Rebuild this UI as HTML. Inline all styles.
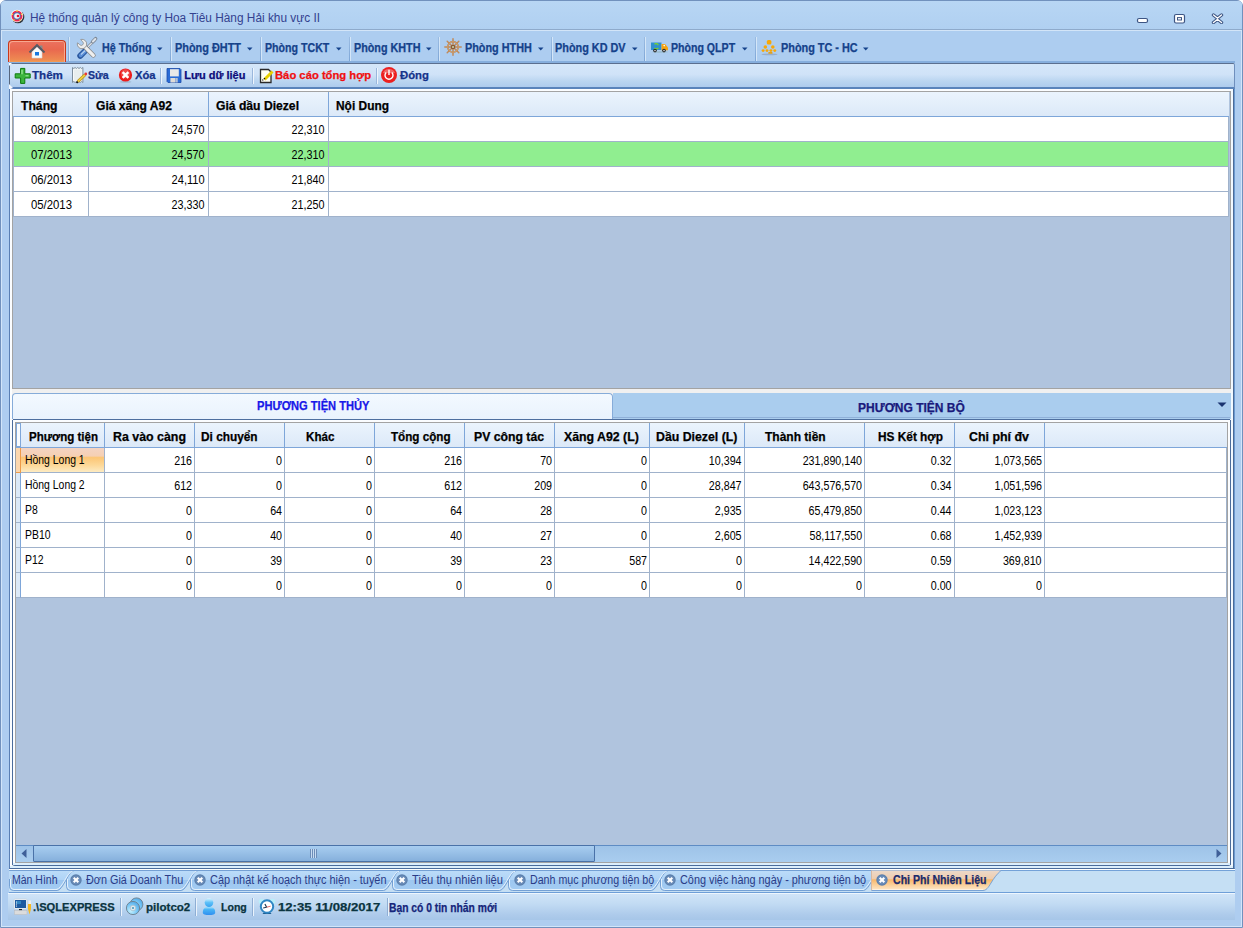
<!DOCTYPE html>
<html><head><meta charset="utf-8"><style>
html,body{margin:0;padding:0;}
body{width:1243px;height:928px;position:relative;overflow:hidden;background:#ffffff;font-family:"Liberation Sans",sans-serif;}
div,span,svg{position:absolute;}
.t{white-space:nowrap;}
</style></head><body>
<div style="left:0px;top:0px;width:1243px;height:928px;background:#aecdf0;border:1px solid #7191bd;box-sizing:border-box;border-radius:6px 6px 0 0;"></div>
<div style="left:1px;top:1px;width:1241px;height:28px;background:linear-gradient(#b8d6f4,#b0d0f1);border-radius:4px 4px 0 0;"></div>
<div style="left:1px;top:29px;width:1241px;height:1px;background:#8eaacb;"></div>
<div style="left:1px;top:30px;width:1241px;height:1px;background:#d3e5f8;"></div>
<div style="left:1px;top:31px;width:1px;height:896px;background:#d2e5f9;"></div>
<div style="left:1241px;top:31px;width:1px;height:896px;background:#d2e5f9;"></div>
<div style="left:2px;top:31px;width:1239px;height:31px;background:#adcdf0;"></div>
<div style="left:9px;top:61px;width:1226px;height:2px;background:#86aedd;"></div>
<svg style="left:9px;top:8px" width="17" height="17" viewBox="0 0 17 17"><circle cx="9" cy="9" r="6.3" fill="#1a1a1a" opacity=".85"/><circle cx="8" cy="8" r="6.2" fill="#fff"/><circle cx="8" cy="8" r="5.5" fill="#f02850"/><circle cx="8" cy="2.9" r=".8" fill="#f4e640"/><circle cx="3.3" cy="6.3" r=".8" fill="#f4e640"/><circle cx="12.7" cy="6.3" r=".8" fill="#f4e640"/><circle cx="5" cy="12" r=".8" fill="#f4e640"/><circle cx="11" cy="12" r=".8" fill="#f4e640"/><circle cx="8" cy="8" r="3.7" fill="#3f78b8"/><circle cx="8" cy="8" r="2.8" fill="#f4f0f4"/><circle cx="9" cy="8" r="1.3" fill="#e8102a"/></svg>
<span class="t" style="left:29.50px;top:12.00px;font-size:12px;line-height:12px;font-weight:normal;color:#33418f;transform:scaleX(0.9880);transform-origin:left top;">Hệ thống quản lý công ty Hoa Tiêu Hàng Hải khu vực II</span>
<svg style="left:1136px;top:17px" width="13" height="7" viewBox="0 0 13 7"><rect x="1.5" y="1.5" width="10" height="4" rx="1.5" fill="#fff" stroke="#3d5583" stroke-width="1.2"/></svg>
<svg style="left:1173px;top:13px" width="13" height="11" viewBox="0 0 13 11"><rect x="1.5" y="1.5" width="10" height="8.5" rx="1.5" fill="#fff" stroke="#3d5583" stroke-width="1.2"/><rect x="4.5" y="4.6" width="4" height="2.4" fill="#fff" stroke="#3d5583" stroke-width="1"/></svg>
<svg style="left:1211px;top:13px" width="13" height="11" viewBox="0 0 13 11"><path d="M2.5 2L6.5 5.2L10.5 2M2.5 9.5L6.5 6.3L10.5 9.5" stroke="#3d5583" stroke-width="3.4" fill="none" stroke-linecap="round" stroke-linejoin="round"/><path d="M2.5 2L6.5 5.2L10.5 2M2.5 9.5L6.5 6.3L10.5 9.5" stroke="#fff" stroke-width="1.4" fill="none" stroke-linecap="round"/></svg>
<div style="left:8px;top:40px;width:58px;height:22px;background:linear-gradient(#ec7260 0%,#e9684f 40%,#ee8a52 90%,#f39c54 100%);border:1px solid #c8381a;border-bottom:none;border-radius:4px 4px 0 0;box-sizing:border-box;box-shadow:inset 1px 1px 0 #f7a890,inset -1px 0 0 #f7a890;"></div>
<svg style="left:28px;top:43px" width="18" height="17" viewBox="0 0 18 17"><path d="M12 2.5h2.5v5h-2.5z" fill="#8a8a8a"/><path d="M4 8.5V15h10V8.5L9 3.8z" fill="#fafafa" stroke="#d8d8d8" stroke-width=".6"/><path d="M1.5 9.5L9 2.2L16.5 9.5" stroke="#555b66" stroke-width="2" fill="none"/><rect x="7" y="9" width="4" height="3.5" fill="#1a78e0"/></svg>
<div style="left:68px;top:37px;width:1px;height:24px;background:linear-gradient(#9bbce2,#7ea6d6);box-shadow:1px 0 0 #d4e6f8;"></div>
<div style="left:170px;top:37px;width:1px;height:24px;background:linear-gradient(#9bbce2,#7ea6d6);box-shadow:1px 0 0 #d4e6f8;"></div>
<div style="left:260px;top:37px;width:1px;height:24px;background:linear-gradient(#9bbce2,#7ea6d6);box-shadow:1px 0 0 #d4e6f8;"></div>
<div style="left:349px;top:37px;width:1px;height:24px;background:linear-gradient(#9bbce2,#7ea6d6);box-shadow:1px 0 0 #d4e6f8;"></div>
<div style="left:438px;top:37px;width:1px;height:24px;background:linear-gradient(#9bbce2,#7ea6d6);box-shadow:1px 0 0 #d4e6f8;"></div>
<div style="left:551px;top:37px;width:1px;height:24px;background:linear-gradient(#9bbce2,#7ea6d6);box-shadow:1px 0 0 #d4e6f8;"></div>
<div style="left:644px;top:37px;width:1px;height:24px;background:linear-gradient(#9bbce2,#7ea6d6);box-shadow:1px 0 0 #d4e6f8;"></div>
<div style="left:755px;top:37px;width:1px;height:24px;background:linear-gradient(#9bbce2,#7ea6d6);box-shadow:1px 0 0 #d4e6f8;"></div>
<svg style="left:72px;top:34px" width="28" height="28" viewBox="0 0 28 28"><g transform="translate(13.6 13.8) scale(0.84) translate(-13.6 -13.8)"><path d="M24.3 4.8L14.5 14.6" stroke="#7d8794" stroke-width="3" stroke-linecap="round"/><path d="M24.3 4.8L14.5 14.6" stroke="#e2e7ec" stroke-width="1.4"/><path d="M22 6.5L25.5 3" stroke="#7d8794" stroke-width="4.2" stroke-linecap="round"/><path d="M22.3 6.2L25.2 3.3" stroke="#dde3ea" stroke-width="2.4" stroke-linecap="round"/><path d="M14.8 15.8L7.2 23.4" stroke="#2a579e" stroke-width="7" stroke-linecap="round"/><path d="M14.3 16.3L7.7 22.9" stroke="#5c90d8" stroke-width="4.2" stroke-linecap="round"/><path d="M12.6 17.4L8.6 21.4" stroke="#c2daf4" stroke-width="1.3" stroke-linecap="round"/><path d="M11 11L22.8 22.8" stroke="#8a8a8a" stroke-width="5.6" stroke-linecap="round"/><path d="M11 11L22.8 22.8" stroke="#efefef" stroke-width="3.8" stroke-linecap="round"/><circle cx="9.3" cy="9.3" r="5.6" fill="#ededed" stroke="#8a8a8a" stroke-width="1"/><path d="M2.3 5.9L5.9 2.3L10.2 6.6A2.2 2.2 0 0 1 6.6 10.2Z" fill="#adcdf0"/><path d="M4.4 7.9L6.6 10.2A2.2 2.2 0 0 0 10.2 6.6L7.9 4.4" fill="none" stroke="#8a8a8a" stroke-width=".9"/></g></svg>
<span class="t" style="left:101.70px;top:42.00px;font-size:12px;line-height:12px;font-weight:bold;-webkit-text-stroke:0.25px;color:#15428b;transform:scaleX(0.8947);transform-origin:left top;">Hệ Thống</span>
<svg style="left:157px;top:47px" width="6" height="4" viewBox="0 0 6 4"><path d="M0 0.5H5.5L2.75 3.5Z" fill="#15428b"/></svg>
<span class="t" style="left:174.50px;top:42.00px;font-size:12px;line-height:12px;font-weight:bold;-webkit-text-stroke:0.25px;color:#15428b;transform:scaleX(0.9084);transform-origin:left top;">Phòng ĐHTT</span>
<svg style="left:247px;top:47px" width="6" height="4" viewBox="0 0 6 4"><path d="M0 0.5H5.5L2.75 3.5Z" fill="#15428b"/></svg>
<span class="t" style="left:264.90px;top:42.00px;font-size:12px;line-height:12px;font-weight:bold;-webkit-text-stroke:0.25px;color:#15428b;transform:scaleX(0.8850);transform-origin:left top;">Phòng TCKT</span>
<svg style="left:336px;top:47px" width="6" height="4" viewBox="0 0 6 4"><path d="M0 0.5H5.5L2.75 3.5Z" fill="#15428b"/></svg>
<span class="t" style="left:353.60px;top:42.00px;font-size:12px;line-height:12px;font-weight:bold;-webkit-text-stroke:0.25px;color:#15428b;transform:scaleX(0.8988);transform-origin:left top;">Phòng KHTH</span>
<svg style="left:426px;top:47px" width="6" height="4" viewBox="0 0 6 4"><path d="M0 0.5H5.5L2.75 3.5Z" fill="#15428b"/></svg>
<svg style="left:444px;top:38px" width="18" height="18" viewBox="0 0 18 18"><path d="M9 9L9.00 0.80" stroke="#c08a5a" stroke-width="1.5" stroke-linecap="round"/><path d="M9 9L14.80 3.20" stroke="#c08a5a" stroke-width="1.5" stroke-linecap="round"/><path d="M9 9L17.20 9.00" stroke="#c08a5a" stroke-width="1.5" stroke-linecap="round"/><path d="M9 9L14.80 14.80" stroke="#c08a5a" stroke-width="1.5" stroke-linecap="round"/><path d="M9 9L9.00 17.20" stroke="#c08a5a" stroke-width="1.5" stroke-linecap="round"/><path d="M9 9L3.20 14.80" stroke="#c08a5a" stroke-width="1.5" stroke-linecap="round"/><path d="M9 9L0.80 9.00" stroke="#c08a5a" stroke-width="1.5" stroke-linecap="round"/><path d="M9 9L3.20 3.20" stroke="#c08a5a" stroke-width="1.5" stroke-linecap="round"/><circle cx="9" cy="9" r="5.3" fill="none" stroke="#b9804e" stroke-width="1.7"/><circle cx="9" cy="9" r="5.3" fill="none" stroke="#e0b888" stroke-width=".6"/><circle cx="9" cy="9" r="2.3" fill="#8a5a34"/><circle cx="9" cy="9" r="1.1" fill="#c8d0a8"/></svg>
<span class="t" style="left:464.70px;top:42.00px;font-size:12px;line-height:12px;font-weight:bold;-webkit-text-stroke:0.25px;color:#15428b;transform:scaleX(0.9028);transform-origin:left top;">Phòng HTHH</span>
<svg style="left:538px;top:47px" width="6" height="4" viewBox="0 0 6 4"><path d="M0 0.5H5.5L2.75 3.5Z" fill="#15428b"/></svg>
<span class="t" style="left:555.40px;top:42.00px;font-size:12px;line-height:12px;font-weight:bold;-webkit-text-stroke:0.25px;color:#15428b;transform:scaleX(0.9052);transform-origin:left top;">Phòng KD DV</span>
<svg style="left:632px;top:47px" width="6" height="4" viewBox="0 0 6 4"><path d="M0 0.5H5.5L2.75 3.5Z" fill="#15428b"/></svg>
<svg style="left:650px;top:41px" width="20" height="12" viewBox="0 0 20 12"><rect x="1" y="1.5" width="10.5" height="7.5" fill="#2f8fd0"/><path d="M11.5 3H15L18 6.5V9.2H11.5Z" fill="#f5a310"/><circle cx="14.2" cy="4.6" r=".8" fill="#fff"/><path d="M4.5 3.2A2.3 2.3 0 0 1 8.3 4.2M8.3 6.8A2.3 2.3 0 0 1 4.5 7" stroke="#7cd22a" stroke-width="1.3" fill="none"/><ellipse cx="10" cy="11" rx="8" ry=".7" fill="#8aa" opacity=".5"/><circle cx="5" cy="9.6" r="1.8" fill="#222"/><circle cx="5" cy="9.6" r=".8" fill="#ddd"/><circle cx="14" cy="9.6" r="1.8" fill="#222"/><circle cx="14" cy="9.6" r=".8" fill="#ddd"/></svg>
<span class="t" style="left:670.90px;top:42.00px;font-size:12px;line-height:12px;font-weight:bold;-webkit-text-stroke:0.25px;color:#15428b;transform:scaleX(0.8822);transform-origin:left top;">Phòng QLPT</span>
<svg style="left:742px;top:47px" width="6" height="4" viewBox="0 0 6 4"><path d="M0 0.5H5.5L2.75 3.5Z" fill="#15428b"/></svg>
<svg style="left:760px;top:38px" width="19" height="18" viewBox="0 0 19 18"><ellipse cx="9.5" cy="16.4" rx="8" ry=".8" fill="#8a9ab0" opacity=".6"/><rect x="6.8" y="2" width="4.6" height="4.4" rx="1.5" fill="#f7a808"/><circle cx="5.3" cy="9" r="1.8" fill="#f7a808"/><circle cx="12.8" cy="9" r="1.8" fill="#f7a808"/><circle cx="3.1" cy="12.6" r="1.45" fill="#f7a808"/><circle cx="7" cy="12.6" r="1.45" fill="#f7a808"/><circle cx="10.9" cy="12.6" r="1.45" fill="#f7a808"/><circle cx="14.8" cy="12.6" r="1.45" fill="#f7a808"/><rect x="8.3" y="14" width="4.2" height="1.8" rx=".6" fill="#e0a020"/></svg>
<span class="t" style="left:780.50px;top:42.00px;font-size:12px;line-height:12px;font-weight:bold;-webkit-text-stroke:0.25px;color:#15428b;transform:scaleX(0.9061);transform-origin:left top;">Phòng TC - HC</span>
<svg style="left:863px;top:47px" width="6" height="4" viewBox="0 0 6 4"><path d="M0 0.5H5.5L2.75 3.5Z" fill="#15428b"/></svg>
<div style="left:9px;top:63px;width:1226px;height:26px;background:linear-gradient(#d4e6f9 0%,#d0e3f8 45%,#bad5f0 75%,#aecced 100%);border-top:1px solid #5b6f8f;border-bottom:2px solid #5a84bb;box-sizing:border-box;border-left:1px solid #56667e;border-right:1px solid #6f8fbd;border-radius:2px 2px 0 0;"></div>
<svg style="left:9px;top:63px" width="4" height="4" viewBox="0 0 4 4"><path d="M0 0H3L0 3Z" fill="#fff"/></svg>
<svg style="left:9px;top:84px" width="5" height="6" viewBox="0 0 5 6"><path d="M0 0L4 4L0 5.5Z" fill="#f4f8fc"/></svg>
<div style="left:160px;top:68px;width:1px;height:16px;background:#9ab7dc;box-shadow:1px 0 0 #eef5fd;"></div>
<div style="left:252px;top:68px;width:1px;height:16px;background:#9ab7dc;box-shadow:1px 0 0 #eef5fd;"></div>
<div style="left:376px;top:68px;width:1px;height:16px;background:#9ab7dc;box-shadow:1px 0 0 #eef5fd;"></div>
<svg style="left:13px;top:66px" width="19" height="19" viewBox="0 0 19 19"><path d="M7.6 2.4h4.2v5.4h5.4v4.2h-5.4v5.4H7.6v-5.4H2.2V7.8h5.4z" fill="#3cb53c" stroke="#0e7a0e" stroke-width="1" stroke-linejoin="round"/><path d="M9 3.8v4.5" stroke="#a6eea0" stroke-width="1.2" fill="none"/><path d="M12.5 9.8h3" stroke="#a6eea0" stroke-width="1" fill="none"/></svg>
<span class="t" style="left:32.00px;top:70.00px;font-size:11px;line-height:11px;font-weight:bold;-webkit-text-stroke:0.25px;color:#15338a;transform:scaleX(1.0533);transform-origin:left top;">Thêm</span>
<svg style="left:70px;top:65px" width="18" height="19" viewBox="0 0 18 19"><path d="M2.5 2.5L3.8 3.5L5.1 2.5L6.4 3.5L7.7 2.5L9 3.5L10.3 2.5L11.6 3.5L12.9 2.5V17.5L11.6 16.5L10.3 17.5L9 16.5L7.7 17.5L6.4 16.5L5.1 17.5L3.8 16.5L2.5 17.5Z" fill="#f6f9f9" stroke="#7d8e9c" stroke-width="1"/><path d="M4 4.5h7.5v11H4z" fill="#e8eeee"/><path d="M7.8 16.6L15.2 9.6" stroke="#b89420" stroke-width="3"/><path d="M7.8 16.6L15.2 9.6" stroke="#f0d040" stroke-width="1.6"/><circle cx="15.8" cy="9" r="1.4" fill="#e83838"/><path d="M6.5 17.8L7.8 16.6" stroke="#111" stroke-width="1.8"/></svg>
<span class="t" style="left:88.00px;top:70.00px;font-size:11px;line-height:11px;font-weight:bold;-webkit-text-stroke:0.25px;color:#15338a;transform:scaleX(0.9617);transform-origin:left top;">Sửa</span>
<svg style="left:117px;top:67px" width="17" height="17" viewBox="0 0 17 17"><ellipse cx="8.5" cy="14.8" rx="6" ry="1.2" fill="#90a8c0" opacity=".5"/><circle cx="8.5" cy="8" r="6.6" fill="#ec1c1c"/><circle cx="8.5" cy="6.8" r="4.6" fill="#f26a6a" opacity=".6"/><path d="M5.6 5.1L11.4 10.9M11.4 5.1L5.6 10.9" stroke="#fff" stroke-width="2.4"/></svg>
<span class="t" style="left:135.00px;top:70.00px;font-size:11px;line-height:11px;font-weight:bold;-webkit-text-stroke:0.25px;color:#15338a;transform:scaleX(1.0211);transform-origin:left top;">Xóa</span>
<svg style="left:166px;top:67px" width="16" height="17" viewBox="0 0 16 17"><path d="M1 1.5h13l1 1v13H2L1 14.5z" fill="#2a6cd6" stroke="#1a4aa8" stroke-width=".8"/><rect x="4" y="2.2" width="8.8" height="7.2" fill="#e8e8e8"/><rect x="4.4" y="11" width="5.2" height="4.5" fill="#e0dcd6"/><rect x="10.2" y="11" width="1.4" height="4.5" fill="#d6d6d6"/></svg>
<span class="t" style="left:184.30px;top:70.00px;font-size:11px;line-height:11px;font-weight:bold;-webkit-text-stroke:0.25px;color:#0c0c7a;">Lưu dữ liệu</span>
<svg style="left:258px;top:67px" width="17" height="17" viewBox="0 0 17 17"><path d="M2.5 2.5h8l2.5 2.5v10.5h-10.5z" fill="#fffff4" stroke="#2a2a2a" stroke-width="1.3"/><path d="M6.5 12.5L14.5 4.5" stroke="#e8d000" stroke-width="3"/><circle cx="4.8" cy="13" r=".7" fill="#222"/><path d="M6 11.2l1 1" stroke="#111" stroke-width="1.2"/></svg>
<span class="t" style="left:275.20px;top:70.00px;font-size:11px;line-height:11px;font-weight:bold;-webkit-text-stroke:0.25px;color:#f01010;transform:scaleX(1.0225);transform-origin:left top;">Báo cáo tổng hợp</span>
<svg style="left:380px;top:66px" width="18" height="18" viewBox="0 0 18 18"><circle cx="9" cy="9" r="8" fill="#ec2020"/><path d="M3 7A6.2 5.5 0 0 1 15 7" fill="#f7a0a0" opacity=".55"/><path d="M6.2 6.4A4 4 0 1 0 11.8 6.4" stroke="#fff" stroke-width="1.4" fill="none"/><path d="M9 3.8V9" stroke="#fff" stroke-width="1.4"/></svg>
<span class="t" style="left:399.50px;top:70.00px;font-size:11px;line-height:11px;font-weight:bold;-webkit-text-stroke:0.25px;color:#15338a;transform:scaleX(1.0284);transform-origin:left top;">Đóng</span>
<div style="left:9px;top:89px;width:1226px;height:780px;background:#f0f0f0;border-left:1px solid #5a7fb4;border-right:1px solid #6b9ad0;border-bottom:1px solid #4a6c9c;box-sizing:border-box;"></div>
<div style="left:10px;top:89px;width:2px;height:779px;background:#fbfdff;"></div>
<div style="left:1231px;top:89px;width:2px;height:779px;background:#f2f9ff;"></div>
<div style="left:1233px;top:89px;width:1px;height:780px;background:#4a6a98;"></div>
<div style="left:12px;top:89px;width:1219px;height:2px;background:#fbfdff;"></div>
<div style="left:12px;top:91px;width:1219px;height:298px;background:#b0c4de;border:1px solid #a3a3a3;box-sizing:border-box;"></div>
<div style="left:13px;top:92px;width:1216px;height:25px;background:linear-gradient(#ebf4fd,#dce9f8);border-bottom:1px solid #7ea6d9;box-sizing:border-box;"></div>
<div style="left:88px;top:92px;width:1px;height:25px;background:#7ea6d9;"></div>
<div style="left:208px;top:92px;width:1px;height:25px;background:#7ea6d9;"></div>
<div style="left:328px;top:92px;width:1px;height:25px;background:#7ea6d9;"></div>
<div style="left:13px;top:117px;width:1216px;height:25px;background:#fff;border-bottom:1px solid #a0b2cb;box-sizing:border-box;"></div>
<div style="left:88px;top:117px;width:1px;height:25px;background:#a0b2cb;"></div>
<div style="left:208px;top:117px;width:1px;height:25px;background:#a0b2cb;"></div>
<div style="left:328px;top:117px;width:1px;height:25px;background:#a0b2cb;"></div>
<div style="left:13px;top:142px;width:1216px;height:25px;background:#90ee90;border-bottom:1px solid #a0b2cb;box-sizing:border-box;"></div>
<div style="left:88px;top:142px;width:1px;height:25px;background:#a0b2cb;"></div>
<div style="left:208px;top:142px;width:1px;height:25px;background:#a0b2cb;"></div>
<div style="left:328px;top:142px;width:1px;height:25px;background:#a0b2cb;"></div>
<div style="left:13px;top:167px;width:1216px;height:25px;background:#fff;border-bottom:1px solid #a0b2cb;box-sizing:border-box;"></div>
<div style="left:88px;top:167px;width:1px;height:25px;background:#a0b2cb;"></div>
<div style="left:208px;top:167px;width:1px;height:25px;background:#a0b2cb;"></div>
<div style="left:328px;top:167px;width:1px;height:25px;background:#a0b2cb;"></div>
<div style="left:13px;top:192px;width:1216px;height:25px;background:#fff;border-bottom:1px solid #a0b2cb;box-sizing:border-box;"></div>
<div style="left:88px;top:192px;width:1px;height:25px;background:#a0b2cb;"></div>
<div style="left:208px;top:192px;width:1px;height:25px;background:#a0b2cb;"></div>
<div style="left:328px;top:192px;width:1px;height:25px;background:#a0b2cb;"></div>
<div style="left:13px;top:117px;width:1px;height:100px;background:#a0b2cb;"></div>
<div style="left:1228px;top:117px;width:1px;height:100px;background:#a0b2cb;"></div>
<span class="t" style="left:21.00px;top:100.00px;font-size:12px;line-height:12px;font-weight:bold;-webkit-text-stroke:0.25px;color:#000;transform:scaleX(1.0140);transform-origin:left top;">Tháng</span>
<span class="t" style="left:96.00px;top:100.00px;font-size:12px;line-height:12px;font-weight:bold;-webkit-text-stroke:0.25px;color:#000;transform:scaleX(1.0055);transform-origin:left top;">Giá xăng A92</span>
<span class="t" style="left:216.00px;top:100.00px;font-size:12px;line-height:12px;font-weight:bold;-webkit-text-stroke:0.25px;color:#000;transform:scaleX(1.0119);transform-origin:left top;">Giá dầu Diezel</span>
<span class="t" style="left:336.00px;top:100.00px;font-size:12px;line-height:12px;font-weight:bold;-webkit-text-stroke:0.25px;color:#000;transform:scaleX(0.9940);transform-origin:left top;">Nội Dung</span>
<span class="t" style="left:31.00px;top:124.00px;font-size:12.6px;line-height:12.6px;font-weight:normal;color:#000;transform:scaleX(0.9002);transform-origin:left top;">08/2013</span>
<span class="t" style="left:166.46px;top:124.00px;font-size:12.6px;line-height:12.6px;font-weight:normal;color:#000;transform:scaleX(0.8563);transform-origin:right top;">24,570</span>
<span class="t" style="left:286.46px;top:124.00px;font-size:12.6px;line-height:12.6px;font-weight:normal;color:#000;transform:scaleX(0.8563);transform-origin:right top;">22,310</span>
<span class="t" style="left:31.00px;top:149.00px;font-size:12.6px;line-height:12.6px;font-weight:normal;color:#000;transform:scaleX(0.9002);transform-origin:left top;">07/2013</span>
<span class="t" style="left:166.46px;top:149.00px;font-size:12.6px;line-height:12.6px;font-weight:normal;color:#000;transform:scaleX(0.8563);transform-origin:right top;">24,570</span>
<span class="t" style="left:286.46px;top:149.00px;font-size:12.6px;line-height:12.6px;font-weight:normal;color:#000;transform:scaleX(0.8563);transform-origin:right top;">22,310</span>
<span class="t" style="left:31.00px;top:174.00px;font-size:12.6px;line-height:12.6px;font-weight:normal;color:#000;transform:scaleX(0.9002);transform-origin:left top;">06/2013</span>
<span class="t" style="left:167.40px;top:174.00px;font-size:12.6px;line-height:12.6px;font-weight:normal;color:#000;transform:scaleX(0.8776);transform-origin:right top;">24,110</span>
<span class="t" style="left:286.46px;top:174.00px;font-size:12.6px;line-height:12.6px;font-weight:normal;color:#000;transform:scaleX(0.8563);transform-origin:right top;">21,840</span>
<span class="t" style="left:31.00px;top:199.00px;font-size:12.6px;line-height:12.6px;font-weight:normal;color:#000;transform:scaleX(0.9002);transform-origin:left top;">05/2013</span>
<span class="t" style="left:166.46px;top:199.00px;font-size:12.6px;line-height:12.6px;font-weight:normal;color:#000;transform:scaleX(0.8563);transform-origin:right top;">23,330</span>
<span class="t" style="left:286.46px;top:199.00px;font-size:12.6px;line-height:12.6px;font-weight:normal;color:#000;transform:scaleX(0.8563);transform-origin:right top;">21,250</span>
<div style="left:12px;top:389px;width:1219px;height:4px;background:#f0f0f0;"></div>
<div style="left:12px;top:393px;width:1219px;height:26px;background:#f0f0f0;"></div>
<div style="left:613px;top:393px;width:618px;height:26px;background:#aacdee;"></div>
<div style="left:12px;top:393px;width:601px;height:26px;background:linear-gradient(#f3f9ff,#e9f3fd);border:1px solid #86acd9;border-bottom:none;border-radius:4px 4px 0 0;box-sizing:border-box;"></div>
<div style="left:613px;top:417px;width:617px;height:1px;background:#8fb0d8;"></div>
<div style="left:13px;top:419px;width:1217px;height:1px;background:#4d6f9f;"></div>
<div style="left:12px;top:420px;width:1219px;height:446px;background:#fbfdff;border-bottom:1px solid #4a6c9c;border-radius:0 0 3px 3px;box-sizing:border-box;"></div>
<div style="left:13px;top:863px;width:1217px;height:2px;background:#dbeefc;"></div>
<div style="left:10px;top:866px;width:1223px;height:2px;background:#dbeefc;"></div>
<div style="left:12px;top:420px;width:1px;height:445px;background:#4a6c9c;"></div>
<div style="left:1230px;top:420px;width:1px;height:445px;background:#4a6c9c;"></div>
<span class="t" style="left:256.80px;top:400.00px;font-size:12px;line-height:12px;font-weight:bold;-webkit-text-stroke:0.25px;color:#1818e8;transform:scaleX(0.9249);transform-origin:left top;">PHƯƠNG TIỆN THỦY</span>
<span class="t" style="left:858.00px;top:402.00px;font-size:12px;line-height:12px;font-weight:bold;-webkit-text-stroke:0.25px;color:#1a1a7c;">PHƯƠNG TIỆN BỘ</span>
<svg style="left:1217px;top:402px" width="10" height="6" viewBox="0 0 10 6"><path d="M0.5 0.5H9.5L5 5Z" fill="#1a3470"/></svg>
<div style="left:15px;top:422px;width:1213px;height:441px;background:#b0c4de;border:1px solid #a3a3a3;box-sizing:border-box;"></div>
<div style="left:16px;top:423px;width:1211px;height:25px;background:linear-gradient(#ebf4fd,#dce9f8);border-bottom:1px solid #7ea6d9;box-sizing:border-box;"></div>
<div style="left:104px;top:423px;width:1px;height:25px;background:#7ea6d9;"></div>
<div style="left:194px;top:423px;width:1px;height:25px;background:#7ea6d9;"></div>
<div style="left:284px;top:423px;width:1px;height:25px;background:#7ea6d9;"></div>
<div style="left:374px;top:423px;width:1px;height:25px;background:#7ea6d9;"></div>
<div style="left:464px;top:423px;width:1px;height:25px;background:#7ea6d9;"></div>
<div style="left:554px;top:423px;width:1px;height:25px;background:#7ea6d9;"></div>
<div style="left:649px;top:423px;width:1px;height:25px;background:#7ea6d9;"></div>
<div style="left:744px;top:423px;width:1px;height:25px;background:#7ea6d9;"></div>
<div style="left:864px;top:423px;width:1px;height:25px;background:#7ea6d9;"></div>
<div style="left:954px;top:423px;width:1px;height:25px;background:#7ea6d9;"></div>
<div style="left:1044px;top:423px;width:1px;height:25px;background:#7ea6d9;"></div>
<div style="left:20px;top:423px;width:1px;height:25px;background:#7ea6d9;"></div>
<div style="left:16px;top:423px;width:5px;height:24px;border:1px solid #7ea6d9;background:#f8fbfe;box-sizing:border-box;"></div>
<div style="left:16px;top:448px;width:1211px;height:25px;background:#fff;border-bottom:1px solid #a0b2cb;box-sizing:border-box;"></div>
<div style="left:16px;top:448px;width:5px;height:25px;background:#dce9f7;border-right:1px solid #7ea6d9;border-bottom:1px solid #a0b2cb;box-sizing:border-box;"></div>
<div style="left:104px;top:448px;width:1px;height:25px;background:#a0b2cb;"></div>
<div style="left:194px;top:448px;width:1px;height:25px;background:#a0b2cb;"></div>
<div style="left:284px;top:448px;width:1px;height:25px;background:#a0b2cb;"></div>
<div style="left:374px;top:448px;width:1px;height:25px;background:#a0b2cb;"></div>
<div style="left:464px;top:448px;width:1px;height:25px;background:#a0b2cb;"></div>
<div style="left:554px;top:448px;width:1px;height:25px;background:#a0b2cb;"></div>
<div style="left:649px;top:448px;width:1px;height:25px;background:#a0b2cb;"></div>
<div style="left:744px;top:448px;width:1px;height:25px;background:#a0b2cb;"></div>
<div style="left:864px;top:448px;width:1px;height:25px;background:#a0b2cb;"></div>
<div style="left:954px;top:448px;width:1px;height:25px;background:#a0b2cb;"></div>
<div style="left:1044px;top:448px;width:1px;height:25px;background:#a0b2cb;"></div>
<div style="left:16px;top:473px;width:1211px;height:25px;background:#fff;border-bottom:1px solid #a0b2cb;box-sizing:border-box;"></div>
<div style="left:16px;top:473px;width:5px;height:25px;background:#dce9f7;border-right:1px solid #7ea6d9;border-bottom:1px solid #a0b2cb;box-sizing:border-box;"></div>
<div style="left:104px;top:473px;width:1px;height:25px;background:#a0b2cb;"></div>
<div style="left:194px;top:473px;width:1px;height:25px;background:#a0b2cb;"></div>
<div style="left:284px;top:473px;width:1px;height:25px;background:#a0b2cb;"></div>
<div style="left:374px;top:473px;width:1px;height:25px;background:#a0b2cb;"></div>
<div style="left:464px;top:473px;width:1px;height:25px;background:#a0b2cb;"></div>
<div style="left:554px;top:473px;width:1px;height:25px;background:#a0b2cb;"></div>
<div style="left:649px;top:473px;width:1px;height:25px;background:#a0b2cb;"></div>
<div style="left:744px;top:473px;width:1px;height:25px;background:#a0b2cb;"></div>
<div style="left:864px;top:473px;width:1px;height:25px;background:#a0b2cb;"></div>
<div style="left:954px;top:473px;width:1px;height:25px;background:#a0b2cb;"></div>
<div style="left:1044px;top:473px;width:1px;height:25px;background:#a0b2cb;"></div>
<div style="left:16px;top:498px;width:1211px;height:25px;background:#fff;border-bottom:1px solid #a0b2cb;box-sizing:border-box;"></div>
<div style="left:16px;top:498px;width:5px;height:25px;background:#dce9f7;border-right:1px solid #7ea6d9;border-bottom:1px solid #a0b2cb;box-sizing:border-box;"></div>
<div style="left:104px;top:498px;width:1px;height:25px;background:#a0b2cb;"></div>
<div style="left:194px;top:498px;width:1px;height:25px;background:#a0b2cb;"></div>
<div style="left:284px;top:498px;width:1px;height:25px;background:#a0b2cb;"></div>
<div style="left:374px;top:498px;width:1px;height:25px;background:#a0b2cb;"></div>
<div style="left:464px;top:498px;width:1px;height:25px;background:#a0b2cb;"></div>
<div style="left:554px;top:498px;width:1px;height:25px;background:#a0b2cb;"></div>
<div style="left:649px;top:498px;width:1px;height:25px;background:#a0b2cb;"></div>
<div style="left:744px;top:498px;width:1px;height:25px;background:#a0b2cb;"></div>
<div style="left:864px;top:498px;width:1px;height:25px;background:#a0b2cb;"></div>
<div style="left:954px;top:498px;width:1px;height:25px;background:#a0b2cb;"></div>
<div style="left:1044px;top:498px;width:1px;height:25px;background:#a0b2cb;"></div>
<div style="left:16px;top:523px;width:1211px;height:25px;background:#fff;border-bottom:1px solid #a0b2cb;box-sizing:border-box;"></div>
<div style="left:16px;top:523px;width:5px;height:25px;background:#dce9f7;border-right:1px solid #7ea6d9;border-bottom:1px solid #a0b2cb;box-sizing:border-box;"></div>
<div style="left:104px;top:523px;width:1px;height:25px;background:#a0b2cb;"></div>
<div style="left:194px;top:523px;width:1px;height:25px;background:#a0b2cb;"></div>
<div style="left:284px;top:523px;width:1px;height:25px;background:#a0b2cb;"></div>
<div style="left:374px;top:523px;width:1px;height:25px;background:#a0b2cb;"></div>
<div style="left:464px;top:523px;width:1px;height:25px;background:#a0b2cb;"></div>
<div style="left:554px;top:523px;width:1px;height:25px;background:#a0b2cb;"></div>
<div style="left:649px;top:523px;width:1px;height:25px;background:#a0b2cb;"></div>
<div style="left:744px;top:523px;width:1px;height:25px;background:#a0b2cb;"></div>
<div style="left:864px;top:523px;width:1px;height:25px;background:#a0b2cb;"></div>
<div style="left:954px;top:523px;width:1px;height:25px;background:#a0b2cb;"></div>
<div style="left:1044px;top:523px;width:1px;height:25px;background:#a0b2cb;"></div>
<div style="left:16px;top:548px;width:1211px;height:25px;background:#fff;border-bottom:1px solid #a0b2cb;box-sizing:border-box;"></div>
<div style="left:16px;top:548px;width:5px;height:25px;background:#dce9f7;border-right:1px solid #7ea6d9;border-bottom:1px solid #a0b2cb;box-sizing:border-box;"></div>
<div style="left:104px;top:548px;width:1px;height:25px;background:#a0b2cb;"></div>
<div style="left:194px;top:548px;width:1px;height:25px;background:#a0b2cb;"></div>
<div style="left:284px;top:548px;width:1px;height:25px;background:#a0b2cb;"></div>
<div style="left:374px;top:548px;width:1px;height:25px;background:#a0b2cb;"></div>
<div style="left:464px;top:548px;width:1px;height:25px;background:#a0b2cb;"></div>
<div style="left:554px;top:548px;width:1px;height:25px;background:#a0b2cb;"></div>
<div style="left:649px;top:548px;width:1px;height:25px;background:#a0b2cb;"></div>
<div style="left:744px;top:548px;width:1px;height:25px;background:#a0b2cb;"></div>
<div style="left:864px;top:548px;width:1px;height:25px;background:#a0b2cb;"></div>
<div style="left:954px;top:548px;width:1px;height:25px;background:#a0b2cb;"></div>
<div style="left:1044px;top:548px;width:1px;height:25px;background:#a0b2cb;"></div>
<div style="left:16px;top:573px;width:1211px;height:25px;background:#fff;border-bottom:1px solid #a0b2cb;box-sizing:border-box;"></div>
<div style="left:16px;top:573px;width:5px;height:25px;background:#dce9f7;border-right:1px solid #7ea6d9;border-bottom:1px solid #a0b2cb;box-sizing:border-box;"></div>
<div style="left:104px;top:573px;width:1px;height:25px;background:#a0b2cb;"></div>
<div style="left:194px;top:573px;width:1px;height:25px;background:#a0b2cb;"></div>
<div style="left:284px;top:573px;width:1px;height:25px;background:#a0b2cb;"></div>
<div style="left:374px;top:573px;width:1px;height:25px;background:#a0b2cb;"></div>
<div style="left:464px;top:573px;width:1px;height:25px;background:#a0b2cb;"></div>
<div style="left:554px;top:573px;width:1px;height:25px;background:#a0b2cb;"></div>
<div style="left:649px;top:573px;width:1px;height:25px;background:#a0b2cb;"></div>
<div style="left:744px;top:573px;width:1px;height:25px;background:#a0b2cb;"></div>
<div style="left:864px;top:573px;width:1px;height:25px;background:#a0b2cb;"></div>
<div style="left:954px;top:573px;width:1px;height:25px;background:#a0b2cb;"></div>
<div style="left:1044px;top:573px;width:1px;height:25px;background:#a0b2cb;"></div>
<div style="left:1226px;top:448px;width:1px;height:150px;background:#a0b2cb;"></div>
<div style="left:21px;top:448px;width:83px;height:24px;background:linear-gradient(#f4d4c2 0%,#f5d0b4 33%,#fcc675 40%,#fdd796 70%,#fdebc2 100%);"></div>
<div style="left:16px;top:448px;width:5px;height:25px;background:#fcd7ae;border-right:1px solid #ee9a48;border-bottom:1px solid #ee9a48;box-sizing:border-box;"></div>
<span class="t" style="left:28.50px;top:431.00px;font-size:12px;line-height:12px;font-weight:bold;-webkit-text-stroke:0.25px;color:#000;transform:scaleX(0.9599);transform-origin:left top;">Phương tiện</span>
<span class="t" style="left:113.30px;top:431.00px;font-size:12px;line-height:12px;font-weight:bold;-webkit-text-stroke:0.25px;color:#000;transform:scaleX(1.0326);transform-origin:left top;">Ra vào càng</span>
<span class="t" style="left:201.40px;top:431.00px;font-size:12px;line-height:12px;font-weight:bold;-webkit-text-stroke:0.25px;color:#000;transform:scaleX(0.9870);transform-origin:left top;">Di chuyển</span>
<span class="t" style="left:305.60px;top:431.00px;font-size:12px;line-height:12px;font-weight:bold;-webkit-text-stroke:0.25px;color:#000;transform:scaleX(0.9678);transform-origin:left top;">Khác</span>
<span class="t" style="left:390.50px;top:431.00px;font-size:12px;line-height:12px;font-weight:bold;-webkit-text-stroke:0.25px;color:#000;transform:scaleX(0.9720);transform-origin:left top;">Tổng cộng</span>
<span class="t" style="left:474.30px;top:431.00px;font-size:12px;line-height:12px;font-weight:bold;-webkit-text-stroke:0.25px;color:#000;transform:scaleX(1.0191);transform-origin:left top;">PV công tác</span>
<span class="t" style="left:564.30px;top:431.00px;font-size:12px;line-height:12px;font-weight:bold;-webkit-text-stroke:0.25px;color:#000;transform:scaleX(1.0261);transform-origin:left top;">Xăng A92 (L)</span>
<span class="t" style="left:656.40px;top:431.00px;font-size:12px;line-height:12px;font-weight:bold;-webkit-text-stroke:0.25px;color:#000;transform:scaleX(1.0259);transform-origin:left top;">Dầu Diezel (L)</span>
<span class="t" style="left:765.00px;top:431.00px;font-size:12px;line-height:12px;font-weight:bold;-webkit-text-stroke:0.25px;color:#000;">Thành tiền</span>
<span class="t" style="left:877.70px;top:431.00px;font-size:12px;line-height:12px;font-weight:bold;-webkit-text-stroke:0.25px;color:#000;transform:scaleX(0.9868);transform-origin:left top;">HS Kết hợp</span>
<span class="t" style="left:969.40px;top:431.00px;font-size:12px;line-height:12px;font-weight:bold;-webkit-text-stroke:0.25px;color:#000;transform:scaleX(1.0328);transform-origin:left top;">Chi phí đv</span>
<span class="t" style="left:24.50px;top:454.00px;font-size:12.6px;line-height:12.6px;font-weight:normal;color:#000;transform:scaleX(0.8273);transform-origin:left top;">Hồng Long 1</span>
<span class="t" style="left:170.98px;top:455.00px;font-size:12.6px;line-height:12.6px;font-weight:normal;color:#000;transform:scaleX(0.8477);transform-origin:right top;">216</span>
<span class="t" style="left:274.99px;top:455.00px;font-size:12.6px;line-height:12.6px;font-weight:normal;color:#000;transform:scaleX(0.8477);transform-origin:right top;">0</span>
<span class="t" style="left:364.99px;top:455.00px;font-size:12.6px;line-height:12.6px;font-weight:normal;color:#000;transform:scaleX(0.8477);transform-origin:right top;">0</span>
<span class="t" style="left:440.98px;top:455.00px;font-size:12.6px;line-height:12.6px;font-weight:normal;color:#000;transform:scaleX(0.8477);transform-origin:right top;">216</span>
<span class="t" style="left:537.98px;top:455.00px;font-size:12.6px;line-height:12.6px;font-weight:normal;color:#000;transform:scaleX(0.8477);transform-origin:right top;">70</span>
<span class="t" style="left:639.99px;top:455.00px;font-size:12.6px;line-height:12.6px;font-weight:normal;color:#000;transform:scaleX(0.8477);transform-origin:right top;">0</span>
<span class="t" style="left:703.46px;top:455.00px;font-size:12.6px;line-height:12.6px;font-weight:normal;color:#000;transform:scaleX(0.8477);transform-origin:right top;">10,394</span>
<span class="t" style="left:791.93px;top:455.00px;font-size:12.6px;line-height:12.6px;font-weight:normal;color:#000;transform:scaleX(0.8477);transform-origin:right top;">231,890,140</span>
<span class="t" style="left:927.48px;top:455.00px;font-size:12.6px;line-height:12.6px;font-weight:normal;color:#000;transform:scaleX(0.8477);transform-origin:right top;">0.32</span>
<span class="t" style="left:985.94px;top:455.00px;font-size:12.6px;line-height:12.6px;font-weight:normal;color:#000;transform:scaleX(0.8477);transform-origin:right top;">1,073,565</span>
<span class="t" style="left:24.50px;top:479.00px;font-size:12.6px;line-height:12.6px;font-weight:normal;color:#000;transform:scaleX(0.8273);transform-origin:left top;">Hồng Long 2</span>
<span class="t" style="left:170.98px;top:480.00px;font-size:12.6px;line-height:12.6px;font-weight:normal;color:#000;transform:scaleX(0.8477);transform-origin:right top;">612</span>
<span class="t" style="left:274.99px;top:480.00px;font-size:12.6px;line-height:12.6px;font-weight:normal;color:#000;transform:scaleX(0.8477);transform-origin:right top;">0</span>
<span class="t" style="left:364.99px;top:480.00px;font-size:12.6px;line-height:12.6px;font-weight:normal;color:#000;transform:scaleX(0.8477);transform-origin:right top;">0</span>
<span class="t" style="left:440.98px;top:480.00px;font-size:12.6px;line-height:12.6px;font-weight:normal;color:#000;transform:scaleX(0.8477);transform-origin:right top;">612</span>
<span class="t" style="left:530.98px;top:480.00px;font-size:12.6px;line-height:12.6px;font-weight:normal;color:#000;transform:scaleX(0.8477);transform-origin:right top;">209</span>
<span class="t" style="left:639.99px;top:480.00px;font-size:12.6px;line-height:12.6px;font-weight:normal;color:#000;transform:scaleX(0.8477);transform-origin:right top;">0</span>
<span class="t" style="left:703.46px;top:480.00px;font-size:12.6px;line-height:12.6px;font-weight:normal;color:#000;transform:scaleX(0.8477);transform-origin:right top;">28,847</span>
<span class="t" style="left:791.93px;top:480.00px;font-size:12.6px;line-height:12.6px;font-weight:normal;color:#000;transform:scaleX(0.8477);transform-origin:right top;">643,576,570</span>
<span class="t" style="left:927.48px;top:480.00px;font-size:12.6px;line-height:12.6px;font-weight:normal;color:#000;transform:scaleX(0.8477);transform-origin:right top;">0.34</span>
<span class="t" style="left:985.94px;top:480.00px;font-size:12.6px;line-height:12.6px;font-weight:normal;color:#000;transform:scaleX(0.8477);transform-origin:right top;">1,051,596</span>
<span class="t" style="left:24.50px;top:504.00px;font-size:12.6px;line-height:12.6px;font-weight:normal;color:#000;transform:scaleX(0.8273);transform-origin:left top;">P8</span>
<span class="t" style="left:184.99px;top:505.00px;font-size:12.6px;line-height:12.6px;font-weight:normal;color:#000;transform:scaleX(0.8477);transform-origin:right top;">0</span>
<span class="t" style="left:267.98px;top:505.00px;font-size:12.6px;line-height:12.6px;font-weight:normal;color:#000;transform:scaleX(0.8477);transform-origin:right top;">64</span>
<span class="t" style="left:364.99px;top:505.00px;font-size:12.6px;line-height:12.6px;font-weight:normal;color:#000;transform:scaleX(0.8477);transform-origin:right top;">0</span>
<span class="t" style="left:447.98px;top:505.00px;font-size:12.6px;line-height:12.6px;font-weight:normal;color:#000;transform:scaleX(0.8477);transform-origin:right top;">64</span>
<span class="t" style="left:537.98px;top:505.00px;font-size:12.6px;line-height:12.6px;font-weight:normal;color:#000;transform:scaleX(0.8477);transform-origin:right top;">28</span>
<span class="t" style="left:639.99px;top:505.00px;font-size:12.6px;line-height:12.6px;font-weight:normal;color:#000;transform:scaleX(0.8477);transform-origin:right top;">0</span>
<span class="t" style="left:710.47px;top:505.00px;font-size:12.6px;line-height:12.6px;font-weight:normal;color:#000;transform:scaleX(0.8477);transform-origin:right top;">2,935</span>
<span class="t" style="left:798.94px;top:505.00px;font-size:12.6px;line-height:12.6px;font-weight:normal;color:#000;transform:scaleX(0.8477);transform-origin:right top;">65,479,850</span>
<span class="t" style="left:927.48px;top:505.00px;font-size:12.6px;line-height:12.6px;font-weight:normal;color:#000;transform:scaleX(0.8477);transform-origin:right top;">0.44</span>
<span class="t" style="left:985.94px;top:505.00px;font-size:12.6px;line-height:12.6px;font-weight:normal;color:#000;transform:scaleX(0.8477);transform-origin:right top;">1,023,123</span>
<span class="t" style="left:24.50px;top:529.00px;font-size:12.6px;line-height:12.6px;font-weight:normal;color:#000;transform:scaleX(0.8273);transform-origin:left top;">PB10</span>
<span class="t" style="left:184.99px;top:530.00px;font-size:12.6px;line-height:12.6px;font-weight:normal;color:#000;transform:scaleX(0.8477);transform-origin:right top;">0</span>
<span class="t" style="left:267.98px;top:530.00px;font-size:12.6px;line-height:12.6px;font-weight:normal;color:#000;transform:scaleX(0.8477);transform-origin:right top;">40</span>
<span class="t" style="left:364.99px;top:530.00px;font-size:12.6px;line-height:12.6px;font-weight:normal;color:#000;transform:scaleX(0.8477);transform-origin:right top;">0</span>
<span class="t" style="left:447.98px;top:530.00px;font-size:12.6px;line-height:12.6px;font-weight:normal;color:#000;transform:scaleX(0.8477);transform-origin:right top;">40</span>
<span class="t" style="left:537.98px;top:530.00px;font-size:12.6px;line-height:12.6px;font-weight:normal;color:#000;transform:scaleX(0.8477);transform-origin:right top;">27</span>
<span class="t" style="left:639.99px;top:530.00px;font-size:12.6px;line-height:12.6px;font-weight:normal;color:#000;transform:scaleX(0.8477);transform-origin:right top;">0</span>
<span class="t" style="left:710.47px;top:530.00px;font-size:12.6px;line-height:12.6px;font-weight:normal;color:#000;transform:scaleX(0.8477);transform-origin:right top;">2,605</span>
<span class="t" style="left:799.87px;top:530.00px;font-size:12.6px;line-height:12.6px;font-weight:normal;color:#000;transform:scaleX(0.8477);transform-origin:right top;">58,117,550</span>
<span class="t" style="left:927.48px;top:530.00px;font-size:12.6px;line-height:12.6px;font-weight:normal;color:#000;transform:scaleX(0.8477);transform-origin:right top;">0.68</span>
<span class="t" style="left:985.94px;top:530.00px;font-size:12.6px;line-height:12.6px;font-weight:normal;color:#000;transform:scaleX(0.8477);transform-origin:right top;">1,452,939</span>
<span class="t" style="left:24.50px;top:554.00px;font-size:12.6px;line-height:12.6px;font-weight:normal;color:#000;transform:scaleX(0.8273);transform-origin:left top;">P12</span>
<span class="t" style="left:184.99px;top:555.00px;font-size:12.6px;line-height:12.6px;font-weight:normal;color:#000;transform:scaleX(0.8477);transform-origin:right top;">0</span>
<span class="t" style="left:267.98px;top:555.00px;font-size:12.6px;line-height:12.6px;font-weight:normal;color:#000;transform:scaleX(0.8477);transform-origin:right top;">39</span>
<span class="t" style="left:364.99px;top:555.00px;font-size:12.6px;line-height:12.6px;font-weight:normal;color:#000;transform:scaleX(0.8477);transform-origin:right top;">0</span>
<span class="t" style="left:447.98px;top:555.00px;font-size:12.6px;line-height:12.6px;font-weight:normal;color:#000;transform:scaleX(0.8477);transform-origin:right top;">39</span>
<span class="t" style="left:537.98px;top:555.00px;font-size:12.6px;line-height:12.6px;font-weight:normal;color:#000;transform:scaleX(0.8477);transform-origin:right top;">23</span>
<span class="t" style="left:625.98px;top:555.00px;font-size:12.6px;line-height:12.6px;font-weight:normal;color:#000;transform:scaleX(0.8477);transform-origin:right top;">587</span>
<span class="t" style="left:734.99px;top:555.00px;font-size:12.6px;line-height:12.6px;font-weight:normal;color:#000;transform:scaleX(0.8477);transform-origin:right top;">0</span>
<span class="t" style="left:798.94px;top:555.00px;font-size:12.6px;line-height:12.6px;font-weight:normal;color:#000;transform:scaleX(0.8477);transform-origin:right top;">14,422,590</span>
<span class="t" style="left:927.48px;top:555.00px;font-size:12.6px;line-height:12.6px;font-weight:normal;color:#000;transform:scaleX(0.8477);transform-origin:right top;">0.59</span>
<span class="t" style="left:996.45px;top:555.00px;font-size:12.6px;line-height:12.6px;font-weight:normal;color:#000;transform:scaleX(0.8477);transform-origin:right top;">369,810</span>
<span class="t" style="left:184.99px;top:580.00px;font-size:12.6px;line-height:12.6px;font-weight:normal;color:#000;transform:scaleX(0.8477);transform-origin:right top;">0</span>
<span class="t" style="left:274.99px;top:580.00px;font-size:12.6px;line-height:12.6px;font-weight:normal;color:#000;transform:scaleX(0.8477);transform-origin:right top;">0</span>
<span class="t" style="left:364.99px;top:580.00px;font-size:12.6px;line-height:12.6px;font-weight:normal;color:#000;transform:scaleX(0.8477);transform-origin:right top;">0</span>
<span class="t" style="left:454.99px;top:580.00px;font-size:12.6px;line-height:12.6px;font-weight:normal;color:#000;transform:scaleX(0.8477);transform-origin:right top;">0</span>
<span class="t" style="left:544.99px;top:580.00px;font-size:12.6px;line-height:12.6px;font-weight:normal;color:#000;transform:scaleX(0.8477);transform-origin:right top;">0</span>
<span class="t" style="left:639.99px;top:580.00px;font-size:12.6px;line-height:12.6px;font-weight:normal;color:#000;transform:scaleX(0.8477);transform-origin:right top;">0</span>
<span class="t" style="left:734.99px;top:580.00px;font-size:12.6px;line-height:12.6px;font-weight:normal;color:#000;transform:scaleX(0.8477);transform-origin:right top;">0</span>
<span class="t" style="left:854.99px;top:580.00px;font-size:12.6px;line-height:12.6px;font-weight:normal;color:#000;transform:scaleX(0.8477);transform-origin:right top;">0</span>
<span class="t" style="left:927.48px;top:580.00px;font-size:12.6px;line-height:12.6px;font-weight:normal;color:#000;transform:scaleX(0.8477);transform-origin:right top;">0.00</span>
<span class="t" style="left:1034.99px;top:580.00px;font-size:12.6px;line-height:12.6px;font-weight:normal;color:#000;transform:scaleX(0.8477);transform-origin:right top;">0</span>
<div style="left:16px;top:845px;width:1211px;height:17px;background:linear-gradient(#9ec3e8,#a9cdef);border-top:1px solid #5e8cc4;box-sizing:border-box;"></div>
<div style="left:33px;top:845px;width:562px;height:17px;background:linear-gradient(#a8cdf0 0%,#97bfe6 50%,#86b0dc 100%);border:1px solid #4a72a8;border-radius:1px;box-sizing:border-box;"></div>
<svg style="left:21px;top:849px" width="6" height="9" viewBox="0 0 6 9"><path d="M5.5 0V9L0.5 4.5Z" fill="#3f5f98"/></svg>
<svg style="left:1216px;top:849px" width="6" height="9" viewBox="0 0 6 9"><path d="M0.5 0V9L5.5 4.5Z" fill="#3f5f98"/></svg>
<svg style="left:310px;top:849px" width="8" height="10" viewBox="0 0 8 10"><path d="M0.5 0V9M2.5 0V9M4.5 0V9M6.5 0V9" stroke="#6c8cb8" stroke-width="1"/><path d="M1.5 0V9M3.5 0V9M5.5 0V9" stroke="#c8dcf2" stroke-width="1"/></svg>
<div style="left:9px;top:869px;width:1226px;height:1px;background:#ffffff;"></div>
<div style="left:9px;top:870px;width:1226px;height:22px;background:#c5dff4;border-top:1px solid #74a2d8;box-sizing:border-box;"></div>
<div style="left:9px;top:892px;width:1226px;height:1px;background:#6f9fd8;"></div>
<svg style="left:660px;top:870px" width="222" height="21" viewBox="0 0 222 21"><path d="M0.5 20.5V0.5H220.5 C214.5 0.5 209.5 20.5 203.5 20.5H4.5 Q0.5 20.5 0.5 16.5Z" fill="url(#tg)"/><path d="M0.5 9V16.5 Q0.5 20.5 4.5 20.5H203.5" fill="none" stroke="#74a0d4" stroke-width="1"/><path d="M1.5 9V16 Q1.5 19.5 5 19.5H203.5" fill="none" stroke="#e4f1fc" stroke-width="1"/><path d="M220.5 0.5 C214.5 0.5 209.5 20.5 203.5 20.5" fill="none" stroke="#74a0d4" stroke-width="1"/><path d="M219.0 1.2 C213.5 1.5 208.5 19.5 202.5 19.5" fill="none" stroke="#e8f3fd" stroke-width="1"/><path d="M0.5 0.5H220.5" stroke="#74a0d4" stroke-width="1"/></svg>
<svg style="left:508px;top:870px" width="162" height="21" viewBox="0 0 162 21"><path d="M0.5 20.5V0.5H160.3 C154.3 0.5 149.3 20.5 143.3 20.5H4.5 Q0.5 20.5 0.5 16.5Z" fill="url(#tg)"/><path d="M0.5 9V16.5 Q0.5 20.5 4.5 20.5H143.3" fill="none" stroke="#74a0d4" stroke-width="1"/><path d="M1.5 9V16 Q1.5 19.5 5 19.5H143.3" fill="none" stroke="#e4f1fc" stroke-width="1"/><path d="M160.3 0.5 C154.3 0.5 149.3 20.5 143.3 20.5" fill="none" stroke="#74a0d4" stroke-width="1"/><path d="M158.8 1.2 C153.3 1.5 148.3 19.5 142.3 19.5" fill="none" stroke="#e8f3fd" stroke-width="1"/><path d="M0.5 0.5H160.3" stroke="#74a0d4" stroke-width="1"/></svg>
<svg style="left:392px;top:870px" width="126" height="21" viewBox="0 0 126 21"><path d="M0.5 20.5V0.5H124.6 C118.6 0.5 113.6 20.5 107.6 20.5H4.5 Q0.5 20.5 0.5 16.5Z" fill="url(#tg)"/><path d="M0.5 9V16.5 Q0.5 20.5 4.5 20.5H107.6" fill="none" stroke="#74a0d4" stroke-width="1"/><path d="M1.5 9V16 Q1.5 19.5 5 19.5H107.6" fill="none" stroke="#e4f1fc" stroke-width="1"/><path d="M124.6 0.5 C118.6 0.5 113.6 20.5 107.6 20.5" fill="none" stroke="#74a0d4" stroke-width="1"/><path d="M123.1 1.2 C117.6 1.5 112.6 19.5 106.6 19.5" fill="none" stroke="#e8f3fd" stroke-width="1"/><path d="M0.5 0.5H124.6" stroke="#74a0d4" stroke-width="1"/></svg>
<svg style="left:190px;top:870px" width="212" height="21" viewBox="0 0 212 21"><path d="M0.5 20.5V0.5H210.6 C204.6 0.5 199.6 20.5 193.6 20.5H4.5 Q0.5 20.5 0.5 16.5Z" fill="url(#tg)"/><path d="M0.5 9V16.5 Q0.5 20.5 4.5 20.5H193.6" fill="none" stroke="#74a0d4" stroke-width="1"/><path d="M1.5 9V16 Q1.5 19.5 5 19.5H193.6" fill="none" stroke="#e4f1fc" stroke-width="1"/><path d="M210.6 0.5 C204.6 0.5 199.6 20.5 193.6 20.5" fill="none" stroke="#74a0d4" stroke-width="1"/><path d="M209.1 1.2 C203.6 1.5 198.6 19.5 192.6 19.5" fill="none" stroke="#e8f3fd" stroke-width="1"/><path d="M0.5 0.5H210.6" stroke="#74a0d4" stroke-width="1"/></svg>
<svg style="left:66px;top:870px" width="134" height="21" viewBox="0 0 134 21"><path d="M0.5 20.5V0.5H132.1 C126.1 0.5 121.1 20.5 115.1 20.5H4.5 Q0.5 20.5 0.5 16.5Z" fill="url(#tg)"/><path d="M0.5 9V16.5 Q0.5 20.5 4.5 20.5H115.1" fill="none" stroke="#74a0d4" stroke-width="1"/><path d="M1.5 9V16 Q1.5 19.5 5 19.5H115.1" fill="none" stroke="#e4f1fc" stroke-width="1"/><path d="M132.1 0.5 C126.1 0.5 121.1 20.5 115.1 20.5" fill="none" stroke="#74a0d4" stroke-width="1"/><path d="M130.6 1.2 C125.1 1.5 120.1 19.5 114.1 19.5" fill="none" stroke="#e8f3fd" stroke-width="1"/><path d="M0.5 0.5H132.1" stroke="#74a0d4" stroke-width="1"/></svg>
<svg style="left:9px;top:870px" width="67" height="21" viewBox="0 0 67 21"><path d="M0.5 20.5V0.5H65.2 C59.2 0.5 54.2 20.5 48.2 20.5H4.5 Q0.5 20.5 0.5 16.5Z" fill="url(#tg)"/><path d="M0.5 9V16.5 Q0.5 20.5 4.5 20.5H48.2" fill="none" stroke="#74a0d4" stroke-width="1"/><path d="M1.5 9V16 Q1.5 19.5 5 19.5H48.2" fill="none" stroke="#e4f1fc" stroke-width="1"/><path d="M65.2 0.5 C59.2 0.5 54.2 20.5 48.2 20.5" fill="none" stroke="#74a0d4" stroke-width="1"/><path d="M63.7 1.2 C58.2 1.5 53.2 19.5 47.2 19.5" fill="none" stroke="#e8f3fd" stroke-width="1"/><path d="M0.5 0.5H65.2" stroke="#74a0d4" stroke-width="1"/></svg>
<span class="t" style="left:11.60px;top:874.00px;font-size:12px;line-height:12px;font-weight:normal;color:#2a3c88;transform:scaleX(0.8746);transform-origin:left top;">Màn Hình</span>
<svg style="left:70.2px;top:874px" width="12" height="12" viewBox="0 0 12 12"><circle cx="6" cy="6" r="5.7" fill="#5b7fac"/><circle cx="6" cy="6" r="4.6" fill="#6a8cb8"/><path d="M3.7 3.7L8.3 8.3M8.3 3.7L3.7 8.3" stroke="#fff" stroke-width="2.1" stroke-linecap="butt"/></svg>
<span class="t" style="left:86.20px;top:874.00px;font-size:12px;line-height:12px;font-weight:normal;color:#2a3c88;transform:scaleX(0.9024);transform-origin:left top;">Đơn Giá Doanh Thu</span>
<svg style="left:193.9px;top:874px" width="12" height="12" viewBox="0 0 12 12"><circle cx="6" cy="6" r="5.7" fill="#5b7fac"/><circle cx="6" cy="6" r="4.6" fill="#6a8cb8"/><path d="M3.7 3.7L8.3 8.3M8.3 3.7L3.7 8.3" stroke="#fff" stroke-width="2.1" stroke-linecap="butt"/></svg>
<span class="t" style="left:209.90px;top:874.00px;font-size:12px;line-height:12px;font-weight:normal;color:#2a3c88;transform:scaleX(0.9090);transform-origin:left top;">Cập nhật kế hoạch thực hiện - tuyến</span>
<svg style="left:395.7px;top:874px" width="12" height="12" viewBox="0 0 12 12"><circle cx="6" cy="6" r="5.7" fill="#5b7fac"/><circle cx="6" cy="6" r="4.6" fill="#6a8cb8"/><path d="M3.7 3.7L8.3 8.3M8.3 3.7L3.7 8.3" stroke="#fff" stroke-width="2.1" stroke-linecap="butt"/></svg>
<span class="t" style="left:411.70px;top:874.00px;font-size:12px;line-height:12px;font-weight:normal;color:#2a3c88;transform:scaleX(0.9321);transform-origin:left top;">Tiêu thụ nhiên liệu</span>
<svg style="left:513.8px;top:874px" width="12" height="12" viewBox="0 0 12 12"><circle cx="6" cy="6" r="5.7" fill="#5b7fac"/><circle cx="6" cy="6" r="4.6" fill="#6a8cb8"/><path d="M3.7 3.7L8.3 8.3M8.3 3.7L3.7 8.3" stroke="#fff" stroke-width="2.1" stroke-linecap="butt"/></svg>
<span class="t" style="left:529.80px;top:874.00px;font-size:12px;line-height:12px;font-weight:normal;color:#2a3c88;transform:scaleX(0.8865);transform-origin:left top;">Danh mục phương tiện bộ</span>
<svg style="left:664px;top:874px" width="12" height="12" viewBox="0 0 12 12"><circle cx="6" cy="6" r="5.7" fill="#5b7fac"/><circle cx="6" cy="6" r="4.6" fill="#6a8cb8"/><path d="M3.7 3.7L8.3 8.3M8.3 3.7L3.7 8.3" stroke="#fff" stroke-width="2.1" stroke-linecap="butt"/></svg>
<span class="t" style="left:680.00px;top:874.00px;font-size:12px;line-height:12px;font-weight:normal;color:#2a3c88;transform:scaleX(0.9057);transform-origin:left top;">Công việc hàng ngày - phương tiện bộ</span>
<svg style="left:871px;top:870px" width="132" height="21" viewBox="0 0 132 21"><defs><linearGradient id="ag" x1="0" y1="0" x2="0" y2="1"><stop offset="0" stop-color="#ebd9cb"/><stop offset=".4" stop-color="#efcdae"/><stop offset=".47" stop-color="#f8b76a"/><stop offset=".6" stop-color="#f9c585"/><stop offset="1" stop-color="#fde9cc"/></linearGradient></defs><path d="M0.5 20.5V0.5H130 C126 4 123 8 120 13 C117 18 115 20.5 112 20.5Z" fill="url(#ag)"/><path d="M0.5 20.5V0.5" stroke="#d9b8a0" stroke-width="1"/><path d="M130 0.5 C126 4 123 8 120 13 C117 18 115 20.5 112 20.5H0.5" fill="none" stroke="#7aa3d4" stroke-width="1"/><path d="M1.5 19.5H112" stroke="#fff1de" stroke-width="1"/></svg>
<svg style="left:876px;top:874px" width="12" height="12" viewBox="0 0 12 12"><circle cx="6" cy="6" r="5.7" fill="#5b7fac"/><circle cx="6" cy="6" r="4.6" fill="#6a8cb8"/><path d="M3.7 3.7L8.3 8.3M8.3 3.7L3.7 8.3" stroke="#fff" stroke-width="2.1" stroke-linecap="butt"/></svg>
<span class="t" style="left:892.80px;top:874.00px;font-size:12px;line-height:12px;font-weight:bold;-webkit-text-stroke:0.25px;color:#1a2a6a;transform:scaleX(0.8820);transform-origin:left top;">Chi Phí Nhiên Liệu</span>
<svg style="left:0;top:0" width="0" height="0"><defs><linearGradient id="tg" x1="0" y1="0" x2="0" y2="1"><stop offset="0" stop-color="#bcdcf9"/><stop offset=".45" stop-color="#b0d4f6"/><stop offset=".5" stop-color="#9dc7f0"/><stop offset="1" stop-color="#a4ccf3"/></linearGradient></defs></svg>
<div style="left:8px;top:893px;width:1227px;height:27px;background:linear-gradient(#edf6fe 0px,#edf6fe 1px,#d0e4f8 1px,#c2dbf3 40%,#aecbeb 80%,#a6c6e8 100%);"></div>
<div style="left:1px;top:926px;width:1241px;height:1px;background:#d2e6fa;"></div>
<div style="left:120px;top:898px;width:1px;height:18px;background:#8eaed4;box-shadow:1px 0 0 #eaf3fc;"></div>
<div style="left:195px;top:898px;width:1px;height:18px;background:#8eaed4;box-shadow:1px 0 0 #eaf3fc;"></div>
<div style="left:252px;top:898px;width:1px;height:18px;background:#8eaed4;box-shadow:1px 0 0 #eaf3fc;"></div>
<div style="left:387px;top:898px;width:1px;height:18px;background:#8eaed4;box-shadow:1px 0 0 #eaf3fc;"></div>
<svg style="left:12px;top:897px" width="20" height="19" viewBox="0 0 20 19"><rect x="2" y="2" width="13" height="10" rx="1" fill="#f0f4f8" stroke="#c8d0d8" stroke-width=".6"/><rect x="3" y="3" width="11" height="8" fill="#1d5aa0"/><rect x="4" y="4" width="5" height="3" fill="#3ea0d8" opacity=".6"/><circle cx="4.5" cy="5" r=".6" fill="#fff"/><circle cx="4.5" cy="7" r=".6" fill="#fff"/><circle cx="4.5" cy="9" r=".6" fill="#fff"/><rect x="7" y="12" width="3" height="1.5" fill="#222"/><rect x="2.5" y="13.5" width="12.5" height="4" fill="#dcdcdc" stroke="#bbb" stroke-width=".5"/><path d="M16 7h3v5l-1.5 5.5L16 12z" fill="#f6b820"/><rect x="16.5" y="3.5" width="2.5" height="3.5" fill="#eee"/></svg>
<span class="t" style="left:33.00px;top:902.00px;font-size:11px;line-height:11px;font-weight:bold;-webkit-text-stroke:0.25px;color:#0a3440;transform:scaleX(1.0112);transform-origin:left top;">.\SQLEXPRESS</span>
<svg style="left:124px;top:896px" width="20" height="20" viewBox="0 0 20 20"><defs><radialGradient id="dg" cx=".35" cy=".7" r=".8"><stop offset="0" stop-color="#c8f2fe"/><stop offset=".6" stop-color="#74c4f4"/><stop offset="1" stop-color="#4aa0e0"/></radialGradient></defs><circle cx="12.5" cy="8.3" r="6.4" fill="url(#dg)" stroke="#6d7f8c" stroke-width=".9"/><circle cx="9" cy="12" r="6.6" fill="url(#dg)" stroke="#6d7f8c" stroke-width=".9"/><circle cx="9" cy="12" r="2.8" fill="#dfe9ee" stroke="#9ab4c2" stroke-width=".6"/><circle cx="9" cy="12" r="1.1" fill="#4a9ac0"/></svg>
<span class="t" style="left:145.60px;top:902.00px;font-size:11px;line-height:11px;font-weight:bold;-webkit-text-stroke:0.25px;color:#0a3440;transform:scaleX(1.0505);transform-origin:left top;">pilotco2</span>
<svg style="left:201px;top:897px" width="16" height="19" viewBox="0 0 16 19"><defs><linearGradient id="ug" x1="0" y1="0" x2="0" y2="1"><stop offset="0" stop-color="#d8f4fe"/><stop offset=".5" stop-color="#5cc0f8"/><stop offset="1" stop-color="#3aa4f0"/></linearGradient><linearGradient id="ub" x1="0" y1="0" x2="0" y2="1"><stop offset="0" stop-color="#b0e6fc"/><stop offset=".35" stop-color="#48b4f6"/><stop offset="1" stop-color="#2f8ff0"/></linearGradient></defs><path d="M1.8 15.5C1.8 11.5 4.5 9.6 8 9.6S14.2 11.5 14.2 15.5C14.2 17.5 11.5 18 8 18S1.8 17.5 1.8 15.5Z" fill="url(#ub)"/><circle cx="8" cy="5.6" r="4.3" fill="url(#ug)"/></svg>
<span class="t" style="left:220.50px;top:902.00px;font-size:11px;line-height:11px;font-weight:bold;-webkit-text-stroke:0.25px;color:#0a3440;transform:scaleX(0.9599);transform-origin:left top;">Long</span>
<svg style="left:258px;top:897px" width="18" height="19" viewBox="0 0 18 19"><circle cx="3.5" cy="4.5" r="2.8" fill="#b8f0fa" opacity=".9"/><circle cx="14.5" cy="4.5" r="2.8" fill="#b8f0fa" opacity=".9"/><path d="M4.5 17L6.5 14.5H11.5L13.5 17Z" fill="#1c5d90"/><circle cx="9" cy="9.5" r="6.2" fill="#fff" stroke="#2f86c4" stroke-width="2"/><path d="M5.2 11L8.6 10.2L6.9 7" stroke="#1a3650" stroke-width="1.1" fill="none"/><path d="M8.6 10.2L12.6 9.2" stroke="#e87070" stroke-width="1"/></svg>
<span class="t" style="left:278.40px;top:902.00px;font-size:11px;line-height:11px;font-weight:bold;-webkit-text-stroke:0.25px;color:#0a3440;transform:scaleX(1.1934);transform-origin:left top;">12:35 11/08/2017</span>
<span class="t" style="left:389.00px;top:902.00px;font-size:12.5px;line-height:12.5px;font-weight:bold;-webkit-text-stroke:0.25px;color:#15257a;transform:scaleX(0.8244);transform-origin:left top;">Bạn có 0 tin nhắn mới</span>
</body></html>
